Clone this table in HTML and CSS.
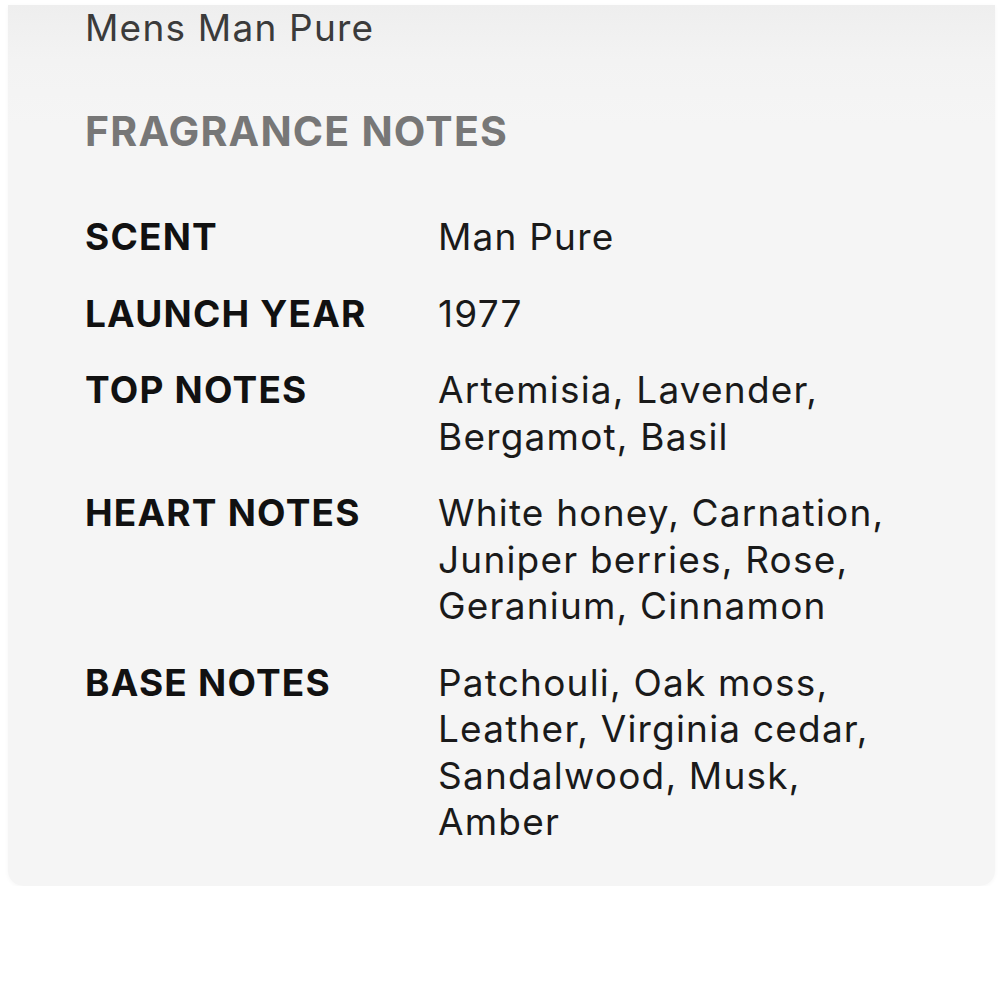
FILE: index.html
```html
<!DOCTYPE html>
<html lang="en">
<head>
<meta charset="utf-8">
<title>Fragrance Notes</title>
<link rel="stylesheet" href="styles.css">
</head>
<body>
  <section class="card">
    <p class="product-name">Mens Man Pure</p>
    <h2 class="section-title">FRAGRANCE NOTES</h2>
    <dl class="notes">
      <dt>SCENT</dt>
      <dd>Man Pure</dd>
      <dt>LAUNCH YEAR</dt>
      <dd>1977</dd>
      <dt>TOP NOTES</dt>
      <dd>Artemisia, Lavender, Bergamot, Basil</dd>
      <dt>HEART NOTES</dt>
      <dd>White honey, Carnation, Juniper berries, Rose, Geranium, Cinnamon</dd>
      <dt>BASE NOTES</dt>
      <dd>Patchouli, Oak moss, Leather, Virginia cedar, Sandalwood, Musk, Amber</dd>
    </dl>
  </section>
</body>
</html>
```

FILE: styles.css
```css
html, body {
  margin: 0;
  padding: 0;
  background: #ffffff;
}

body {
  font-family: Inter, "Noto Sans", "Liberation Sans", sans-serif;
  padding: 5px 5px 0 8px;
}

.card {
  background: linear-gradient(to bottom, #eeeeee 0px, #f3f3f3 55px, #f5f5f5 120px);
  border-radius: 0 0 15px 15px;
  box-shadow: 0 1px 4px rgba(0, 0, 0, 0.04);
  padding: 0 77px 40px 77px;
}

.product-name {
  margin: 0;
  font-size: 37px;
  line-height: 46px;
  letter-spacing: 1.2px;
  color: #3b3b3b;
  font-weight: 400;
}

.section-title {
  margin: 55px 0 0 0;
  font-size: 41px;
  line-height: 50px;
  letter-spacing: 1.2px;
  font-weight: 700;
  color: #777777;
}

.notes {
  margin: 58px 0 0 0;
  display: grid;
  grid-template-columns: 353px 1fr;
  row-gap: 30px;
  font-size: 37px;
  line-height: 46.5px;
  letter-spacing: 1.2px;
}

.notes dt {
  font-weight: 700;
  color: #111111;
}

.notes dd {
  margin: 0;
  color: #1a1a1a;
}
```
